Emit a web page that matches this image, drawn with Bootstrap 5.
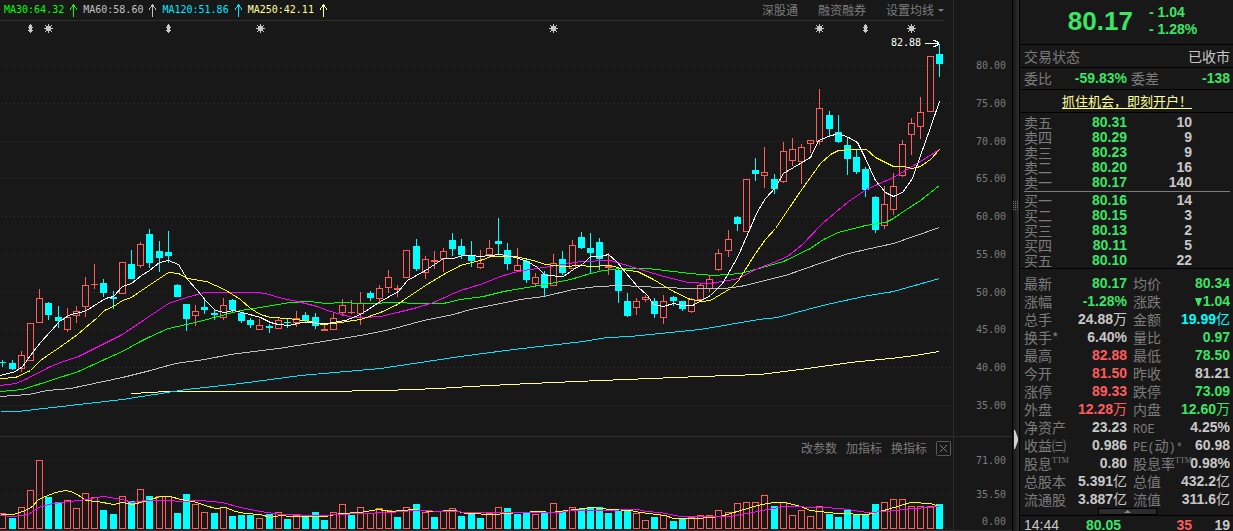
<!DOCTYPE html>
<html lang="zh-CN" data-bs-theme="dark">
<head>
<meta charset="utf-8">
<meta name="viewport" content="width=device-width, initial-scale=1">
<title>K线行情</title>
<link rel="stylesheet" href="https://cdn.jsdelivr.net/npm/bootstrap@5.3.0/dist/css/bootstrap.min.css">
<style>
  body { background: #181818; color: #c8c8c8; font-family: "Liberation Sans", "Noto Sans CJK SC", sans-serif; font-size: 14px; }
  .digits { font: 10px/12px "DejaVu Sans Mono", monospace; }
  .top-bar { height: 21px; border-bottom: 1px solid #2c2c2c; margin-right: 9px; }
  .ma-item svg { margin: 0 6px; }
  .tool { background: none; border: 0; padding: 0; color: #7c7c7c; font: 12px/18px "Noto Sans CJK SC", sans-serif; text-decoration: none; }
  .tool-caret { border: 3px solid transparent; border-top-color: #7c7c7c; border-bottom: 0; }
  .plot { width: 100%; display: block; }
  .price-plot { height: 415px; }
  .volume-plot { height: 71px; }
  .high-flag { top: 16px; right: 14px; color: #fff; }
  .volume-tools { height: 22px; gap: 9px; }
  .axis { width: 59px; border-left: 1px solid #2c2c2c; color: #7c7c7c; padding-right: 6px; text-align: right; }
  .price-axis { height: 436px; padding-top: 60px; padding-bottom: 24px; }
  .volume-axis { padding-top: 18px; }
  .volume-axis span + span { margin-top: 22px; }
  .volume-axis span:last-child { margin-top: 15px; }
  .rule-top { border-top: 1px solid #2c2c2c; }
  .gutter { width: 8px; border: solid #000; border-width: 0 1px; background: linear-gradient(90deg, #181818, #2e2e2e); }
  .grip { margin-top: 201px; margin-bottom: 219px; }
  .quote { width: 213px; }
  .quote > * { border-bottom: 1px solid #000; padding-left: 4px; padding-right: 3px; }
  .last-price { font: bold 26px/26px "Liberation Sans", sans-serif; }
  .quote .quote-head { height: 45px; gap: 16px; padding-left: 16px; padding-right: 4px; padding-bottom: 2px; }
  .change { font: bold 14px/17px "Liberation Sans", sans-serif; }
  .row-status { height: 23px; padding-bottom: 1px; }
  .row-ratio { height: 22px; padding-bottom: 1px; }
  .ratio-main { width: 103px; }
  .ad { font: 13px/16px "Noto Sans CJK SC", sans-serif; color: #ffff9b; text-decoration: underline; text-underline-offset: 2px; }
  .lbl, th { color: #7c7c7c; font: 14px "Noto Sans CJK SC", sans-serif; white-space: nowrap; text-align: left; }
  .val, td { font: bold 14px "Liberation Sans", "Noto Sans CJK SC", sans-serif; white-space: nowrap; text-align: right; }
  .cn { font: 14px/14px "Noto Sans CJK SC", sans-serif; }
  th, td { padding: 0; }
  .quote table { width: 100%; table-layout: fixed; }
  .depth { padding-top: 2px; }
  .depth th, .depth td { height: 15px; line-height: 15px; }
  .depth-split { border-top: 1px solid #7c7c7c; margin: 1px 0; }
  .facts { padding-top: 5px; }
  .facts th, .facts td { height: 18px; line-height: 18px; }
  .facts th + td + th { padding-left: 6px; }
  .facts sup { font: 8px/1px "Liberation Serif", serif; top: -6px; color: #7c7c7c; }
  .latin { font: 12px/1px "Liberation Mono", monospace; }
  .fold { height: 7px; width: 59px; background: #2c2c2c; border: 1px solid #000; padding: 0; }
  .up { color: #ff5c5c; }
  .down { color: #3ce566; }
  .money { color: #00ffff; }
  .trade td { line-height: 18px; }
</style>
</head>
<body class="vh-100 overflow-hidden">
<div class="d-flex h-100">
  <main class="flex-grow-1 d-flex flex-column">
    <section class="d-flex">
      <div class="flex-grow-1">
        <div class="top-bar d-flex justify-content-between align-items-center">
          <div class="d-flex align-items-center ps-1 digits" id="maLegend"></div>
          <div class="d-flex align-items-center">
            <a href="#" class="tool">深股通</a>
            <a href="#" class="tool ms-3 ps-1">融资融券</a>
            <button type="button" class="tool ms-3 ps-1 d-flex align-items-center gap-1">设置均线<span class="tool-caret"></span></button>
          </div>
        </div>
        <div class="position-relative">
          <svg class="plot price-plot" id="price" viewBox="0 21 953 415" preserveAspectRatio="none" role="img" aria-label="日K线"></svg>
          <div class="high-flag position-absolute d-flex align-items-center digits">82.88
            <svg class="ms-1" width="14" height="9" fill="none" stroke="#fff" shape-rendering="crispEdges"><path d="M0 4.500H14M8 1.500h2v1h2v1h2M8 7.500h2v-1h2v-1h2"/></svg>
          </div>
        </div>
      </div>
      <div class="axis price-axis digits d-flex flex-column justify-content-between">
        <span>80.00</span><span>75.00</span><span>70.00</span><span>65.00</span><span>60.00</span>
        <span>55.00</span><span>50.00</span><span>45.00</span><span>40.00</span><span>35.00</span>
      </div>
    </section>
    <section class="d-flex rule-top">
      <div class="flex-grow-1">
        <div class="volume-tools d-flex justify-content-end align-items-center">
          <button type="button" class="tool">改参数</button>
          <button type="button" class="tool">加指标</button>
          <button type="button" class="tool">换指标</button>
          <button type="button" class="tool d-flex" aria-label="关闭">
            <svg width="17" height="16" fill="none" stroke="#7c7c7c"><rect x=".5" y="1.500" width="14" height="14" rx="1" stroke="#585858"/><path d="M4 5l7 7M11 5l-7 7"/></svg>
          </button>
        </div>
        <svg class="plot volume-plot" id="volume" viewBox="0 459 953 71" preserveAspectRatio="none" role="img" aria-label="成交量"></svg>
      </div>
      <div class="axis volume-axis digits d-flex flex-column">
        <span>71.00</span><span>35.50</span><span>0.00</span>
      </div>
    </section>
    <div class="rule-top"></div>
  </main>

  <div class="gutter flex-shrink-0">
    <svg class="grip d-block" width="6" height="10" stroke="#777" stroke-dasharray="1 1"><path d="M.5 0V10M2.500 0V10M4.500 0V10"/></svg>
    <svg class="d-block" width="6" height="19" fill="#d0d0d0"><path d="M1 0h1l3 8v3l-3 8h-1z"/></svg>
  </div>

  <aside class="quote flex-shrink-0 d-flex flex-column">
    <div class="quote-head d-flex justify-content-center align-items-center down flex-shrink-0">
      <span class="last-price">80.17</span>
      <div class="change"><div>- 1.04</div><div>- 1.28%</div></div>
    </div>
    <div class="row-status d-flex justify-content-between align-items-center flex-shrink-0"><span class="lbl">交易状态</span><span class="cn">已收市</span></div>
    <div class="row-ratio d-flex align-items-center flex-shrink-0">
      <div class="ratio-main d-flex justify-content-between align-items-center"><span class="lbl">委比</span><span class="val down">-59.83%</span></div>
      <div class="flex-grow-1 d-flex justify-content-between align-items-center ms-1"><span class="lbl">委差</span><span class="val down">-138</span></div>
    </div>
    <div class="row-status d-flex justify-content-center align-items-center flex-shrink-0"><a href="#" class="ad">抓住机会，即刻开户！</a></div>
    <div class="depth flex-shrink-0">
      <table id="asks"><colgroup><col style="width:40px"><col style="width:63px"><col style="width:65px"><col></colgroup><tbody></tbody></table>
      <div class="depth-split"></div>
      <table id="bids"><colgroup><col style="width:40px"><col style="width:63px"><col style="width:65px"><col></colgroup><tbody></tbody></table>
    </div>
    <div class="facts flex-shrink-0 border-bottom-0">
      <table><colgroup><col style="width:43px"><col style="width:60px"><col style="width:50px"><col></colgroup>
      <tbody>
        <tr><th>最新</th><td class="down">80.17</td><th>均价</th><td class="down">80.34</td></tr>
        <tr><th>涨幅</th><td class="down">-1.28%</td><th>涨跌</th><td class="down"><svg width="8" height="8" fill="currentColor"><path d="M0 0h7L4 8H3z"/></svg>1.04</td></tr>
        <tr><th>总手</th><td>24.88<span class="cn">万</span></td><th>金额</th><td class="money">19.99<span class="cn">亿</span></td></tr>
        <tr><th>换手*</th><td>6.40%</td><th>量比</th><td class="down">0.97</td></tr>
        <tr><th>最高</th><td class="up">82.88</td><th>最低</th><td class="down">78.50</td></tr>
        <tr><th>今开</th><td class="up">81.50</td><th>昨收</th><td>81.21</td></tr>
        <tr><th>涨停</th><td class="up">89.33</td><th>跌停</th><td class="down">73.09</td></tr>
        <tr><th>外盘</th><td class="up">12.28<span class="cn">万</span></td><th>内盘</th><td class="down">12.60<span class="cn">万</span></td></tr>
        <tr><th>净资产</th><td>23.23</td><th><span class="latin">ROE</span></th><td>4.25%</td></tr>
        <tr><th>收益㈢</th><td>0.986</td><th><span class="latin">PE(</span>动<span class="latin">)*</span></th><td>60.98</td></tr>
        <tr><th>股息<sup>TTM</sup></th><td>0.80</td><th>股息率<sup>TTM</sup></th><td>0.98%</td></tr>
        <tr><th>总股本</th><td>5.391<span class="cn">亿</span></td><th>总值</th><td>432.2<span class="cn">亿</span></td></tr>
        <tr><th>流通股</th><td>3.887<span class="cn">亿</span></td><th>流值</th><td>311.6<span class="cn">亿</span></td></tr>
      </tbody></table>
    </div>
    <div class="d-flex justify-content-center flex-shrink-0">
      <button type="button" class="fold d-flex justify-content-center align-items-center" aria-label="展开"><svg width="7" height="3" fill="#8a8a8a"><path d="M0 3L3.500 0L7 3z"/></svg></button>
    </div>
    <div class="trade flex-shrink-0 border-0">
      <table><colgroup><col style="width:40px"><col style="width:57px"><col style="width:71px"><col></colgroup>
      <tbody><tr><td class="text-start fw-normal">14:44</td><td class="down">80.05</td><td class="up">35</td><td>19</td></tr></tbody></table>
    </div>
  </aside>
</div>

<script src="https://cdn.jsdelivr.net/npm/bootstrap@5.3.0/dist/js/bootstrap.bundle.min.js"></script>
<script>
  const RED = '#ff5c5c', CYAN = '#00ffff';
  const centre = i => Math.round(2.45 + 9.18 * i);

  // moving-average legend
  document.getElementById('maLegend').innerHTML = [
    ['MA30:64.32', '#00ff00'], ['MA60:58.60', '#c0c0c0'], ['MA120:51.86', '#00e5ff'], ['MA250:42.11', '#ffff9b']
  ].map(([t, c]) => `<span class="ma-item d-flex align-items-center" style="color:${c}">${t}<svg width="7" height="13" fill="none" stroke="${c}" shape-rendering="crispEdges"><path d="M3.500 0V13M2.500 1v2M4.500 1v2M1.500 3v1M5.500 3v1M.5 4v2M6.500 4v2"/></svg></span>`).join('');

  // order book
  const book = (id, rows) => document.querySelector(`#${id} tbody`).innerHTML =
    rows.map(r => `<tr><th>${r[0]}</th><td class="down">${r[1]}</td><td>${r[2]}</td><td></td></tr>`).join('');
  book('asks', [['卖五', '80.31', 10], ['卖四', '80.29', 9], ['卖三', '80.23', 9], ['卖二', '80.20', 16], ['卖一', '80.17', 140]]);
  book('bids', [['买一', '80.16', 14], ['买二', '80.15', 3], ['买三', '80.13', 2], ['买四', '80.11', 5], ['买五', '80.10', 22]]);

  // one candle: direction, wick top, body top, body bottom, wick bottom
  const candles = `d360,362,363,367 d360,363,369,370 u351,355,369,372 u323,323,361,361 u289,298,323,323 d302,303,315,320 d306,317,321,328 u308,317,330,332 u306,311,316,323 u277,285,307,317
u264,284,285,289 d279,283,293,297 d291,297,299,309 u262,262,294,294 d250,264,279,279 u242,244,266,268 d229,234,263,268 d241,251,258,272 d231,252,256,263 d284,285,297,297
d304,304,319,331 u305,311,316,326 d298,307,310,314 d309,313,315,320 u298,305,318,320 d299,300,310,312 d312,313,321,323 d318,320,325,328 u319,325,330,330 d324,326,328,333
u318,320,329,329 d319,322,323,328 u311,318,323,327 d312,315,321,322 d313,317,326,329 u324,329,331,331 u313,318,330,330 u299,305,313,316 u300,312,313,314 u292,303,314,325
d291,293,298,301 u285,288,299,302 u270,277,288,293 u285,288,290,297 u250,250,278,278 d239,246,269,271 u256,259,273,279 u251,260,262,269 u248,251,259,272 d233,240,249,256
d239,246,255,259 d241,255,261,267 u250,263,268,269 u240,248,255,258 d218,241,244,254 d243,250,264,270 u248,265,271,271 d259,261,280,283 u273,277,284,286 d271,274,288,296
u254,263,286,286 d251,259,273,275 u240,245,269,269 d232,237,248,249 d233,248,253,273 d238,242,259,270 u253,266,268,275 d269,270,291,303 d293,301,316,317 u298,301,308,315
u295,297,300,302 d298,301,314,318 u295,301,318,324 d296,297,301,306 d301,301,309,311 u298,299,312,313 u284,285,300,301 u276,279,289,292 u249,253,270,271 u230,239,251,257
d216,217,224,231 u179,179,232,232 d158,170,174,181 u147,172,176,188 d174,179,189,194 u142,151,182,183 u138,149,161,166 u144,147,162,184 u140,140,144,153 u89,108,142,145
d111,115,129,137 d115,132,142,143 d138,145,159,175 d149,157,172,174 d167,169,190,197 d196,197,230,233 u186,204,226,229 u173,186,210,215 u140,144,176,177 u118,123,135,155
u97,112,127,139 u56,56,112,112 d44,54,64,77`.split(/\s+/);

  // volume bar tops
  const volumes = `u513 d518 u507 u490 u460 d497 d502 u500 u508 u493 u497 d510 d514 u496 d501 u489 d496 u496 u496 d513 d494 u504 u512 d513 u507 d516 d515 d515 u518 d514 u512 d519 u515 d516 d512
d520 u512 u504 d515 u507 u513 u508 u510 d517 u507 d504 u512 d517 u511 u508 d516 d513 d518 u513 u507 d508 d514 d513 u514 d513 u503 d511 u507 d509 d507 d507 d513 d511 d511 u513
u520 d517 u515 d521 d518 u517 u515 u515 u510 u512 u503 u502 u502 u495 d506 u502 u515 u510 u516 u506 d514 d517 d510 d515 d514 d504 u502 u499 u499 u506 u506 u506 d504`.split(/\s+/);

  const block = (dir, x, top, bottom) => dir === 'd'
    ? `<rect x="${x - 3}" y="${top}" width="7" height="${Math.max(1, bottom - top)}" fill="${CYAN}"/>`
    : bottom - top < 2
      ? `<rect x="${x - 3}" y="${top}" width="7" height="1" fill="${RED}"/>`
      : `<path d="M${x - 3} ${top}h7v${bottom - top}h-7zM${x - 2} ${top + 1}v${bottom - top - 2}h5v${-(bottom - top - 2)}z" fill="${RED}"/>`;
  const wick = (c, x, a, b) => b > a ? `<rect x="${x}" y="${a}" width="1" height="${b - a}" fill="${c}"/>` : '';
  const grid = ys => ys.map(y => `<path d="M2 ${y}.5H953" stroke="#363636" stroke-dasharray="1 3"/>`).join('');
  const line = (c, pts) => `<polyline points="${pts}" fill="none" stroke="${c}" stroke-width="1" transform="translate(.5 .5)"/>`;
  const sun = x => `<path d="M${x} 24h1v9h-1zM${x - 4} 28h9v1h-9zM${x - 3} 25h1v1h-1zM${x + 3} 25h1v1h-1zM${x - 3} 31h1v1h-1zM${x + 3} 31h1v1h-1zM${x - 1} 26h3v5h-3zM${x - 2} 27h5v3h-5zM${x - 2} 26h5v5h-5z"/>`;
  const pill = x => `<path d="M${x} 24h1v1h1v2h1v1h-1v2h1v1h-1v1h-1v1h-1v-1h-1v-1h-1v-1h1v-2h-1v-1h1v-2h1z"/>`;

  document.getElementById('price').innerHTML = `<g shape-rendering="crispEdges">` +
    grid([65, 103, 141, 178, 216, 254, 292, 329, 367, 405]) +
    `<g fill="#c8c8c8">${[48, 260, 553, 819, 911].map(sun).join('')}${[30, 168, 865].map(pill).join('')}</g>` +
    candles.map((s, i) => {
      const d = s[0], [a, t, b, e] = s.slice(1).split(',').map(Number), x = centre(i), c = d === 'd' ? CYAN : RED;
      return wick(c, x, a, t) + block(d, x, t, b) + wick(c, x, b, e);
    }).join('') +
    line('#ffff9b', '131,393 150,392 165,391 320,391 384,390 438,388 470,386 530,383 600,380 700,376 760,374 800,369 850,362 890,358 915,355 939,351') +
    line('#00e5ff', '0,411 17,411 122,399 186,389 240,383 300,375 380,368 460,356 513,349 583,341 607,337 630,336 700,329 758,319 777,317 822,305 863,296 893,291 939,278') +
    line('#c0c0c0', '0,396 28,394 47,390 70,388 122,377 150,370 175,363 204,359 230,354 278,348 310,343 360,335 390,329 423,320 453,314 470,309 500,303 520,299 543,296 573,289 597,286 620,285 660,287 693,288 723,288 740,286 785,275 822,262 848,253 870,248 893,243 939,227') +
    line('#00ff00', '0,391 22,389 50,380 78,371 104,359 122,351 140,341 150,336 168,328 195,322 225,314 240,310 260,307 290,302 310,301 325,303 343,302 360,303 373,303 390,302 423,303 443,303 460,299 483,296 503,291 533,286 550,283 570,279 590,273 603,270 620,268 647,268 673,271 690,273 713,275 740,273 762,267 783,261 810,248 823,239 838,232 865,225 885,222 893,218 903,211 920,200 939,185') +
    line('#ff00ff', '0,385 15,383 25,379 50,366 60,362 78,356 122,334 150,315 168,303 186,297 204,292 256,292 265,293 282,298 297,301 317,306 327,310 352,317 363,317 380,316 397,312 417,307 433,302 453,293 460,290 480,284 500,276 517,271 543,267 563,264 580,261 610,260 620,263 637,268 660,275 687,282 710,283 728,280 738,278 755,269 773,262 787,256 802,244 822,223 848,201 866,189 893,177 920,161 939,149') +
    line('#ffff00', '0,378 15,377 30,370 40,360 50,353 59,347 77,334 97,317 104,310 113,306 122,300 131,297 141,290 168,272 178,273 187,278 206,281 224,289 240,299 250,308 260,314 270,317 288,318 310,321 322,324 333,323 360,319 380,312 397,304 407,297 425,285 443,274 460,265 483,259 490,256 515,256 533,260 545,264 563,266 580,265 590,266 610,265 627,270 637,271 653,279 673,291 690,299 702,301 710,300 730,288 738,280 755,253 765,239 775,228 785,213 802,188 820,163 830,154 838,150 850,149 866,149 875,157 893,166 903,166 912,168 920,166 930,159 939,149') +
    line('#ffffff', '0,375 15,371 22,366 30,355 40,342 50,331 59,321 70,314 80,312 86,310 97,303 105,298 113,296 122,286 131,283 141,275 149,270 159,262 168,260 178,264 187,279 196,289 206,301 215,310 224,312 233,310 242,312 260,317 270,322 278,324 288,325 302,322 327,323 345,320 360,314 380,301 398,291 407,280 425,270 443,258 453,258 462,255 470,255 480,256 490,255 500,254 515,257 527,261 537,267 545,275 563,276 573,269 582,264 590,256 600,256 608,254 617,262 625,272 637,286 647,295 653,304 663,306 673,303 682,305 692,305 710,295 722,283 737,257 747,234 757,211 765,198 775,187 783,173 793,167 810,157 818,140 828,136 838,133 848,137 857,142 865,158 875,180 885,192 893,196 902,192 912,178 920,155 930,127 939,101') +
    `</g>`;

  document.getElementById('volume').innerHTML = `<g shape-rendering="crispEdges">` +
    grid([460, 494, 528]) +
    volumes.map((s, i) => block(s[0], centre(i), +s.slice(1), 529)).join('') +
    line('#ffff00', '0,514 13,514 25,510 32,506 38,499 45,496 55,492 65,490 70,491 77,494 85,500 97,501 113,504 122,502 132,504 140,502 150,499 160,496 170,496 180,499 193,501 205,505 215,508 225,507 235,511 245,513 260,514 270,517 280,515 290,516 325,516 340,513 360,512 378,509 390,511 413,509 430,511 455,510 465,513 495,514 505,513 520,512 540,511 550,512 567,510 590,507 610,509 630,510 640,512 665,515 673,518 697,518 720,516 740,510 757,505 773,502 785,502 800,506 810,510 837,513 867,514 887,509 910,502 930,503 939,506') +
    line('#ff00ff', '0,515 13,516 28,514 38,507 52,503 70,501 85,499 103,496 122,499 132,502 145,500 170,500 178,501 200,500 222,502 240,507 260,511 280,514 320,515 340,514 360,513 390,512 413,510 450,511 470,512 560,512 570,510 600,510 638,509 645,511 660,512 680,516 730,516 740,514 757,511 783,506 823,507 840,508 867,512 887,511 903,509 939,506') +
    `</g>`;
</script>
</body>
</html>
